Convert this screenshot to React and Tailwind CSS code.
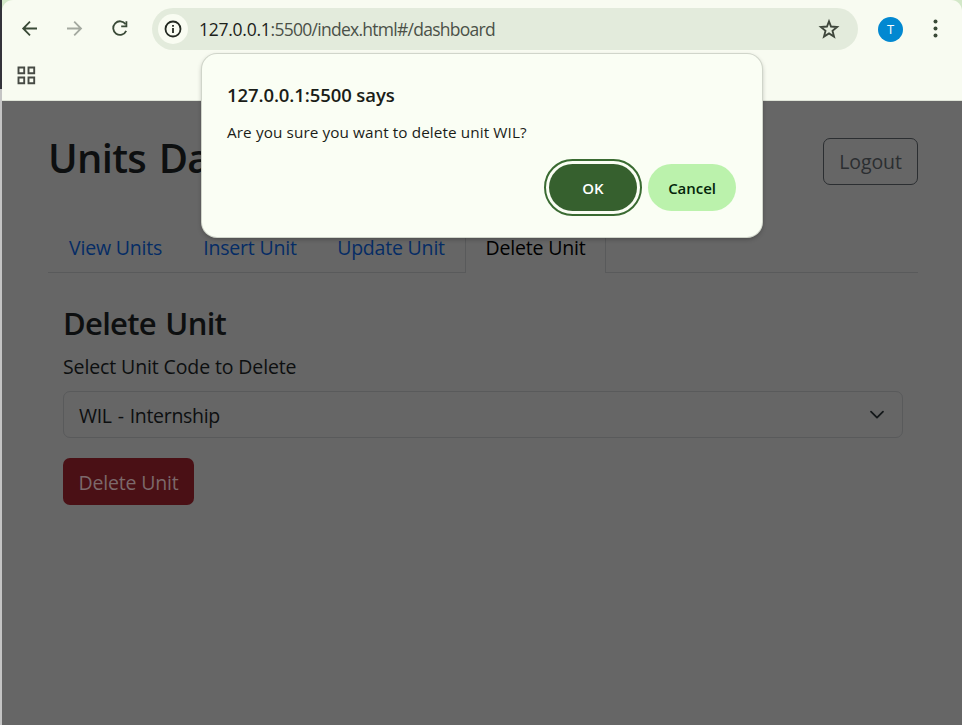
function Toolbar() {
  return (
    <header className="h-[101px] shrink-0 rounded-t-[11px] border-b border-[#dfe4d8] bg-[#f8fbf1]">
      <div className="flex h-[58px] items-center">
        <svg className="ml-[16px] size-6 shrink-0" viewBox="0 0 24 24" fill="none" stroke="#3a4a37" strokeWidth="1.8">
          <path d="M19 11.5H5.5M12 4.7L5.2 11.5L12 18.3" />
        </svg>
        <svg className="ml-[21px] size-6 shrink-0" viewBox="0 0 24 24" fill="none" stroke="#a4a9a0" strokeWidth="1.8">
          <path d="M4 11.5H17.8M11.2 4.7L18 11.5L11.2 18.3" />
        </svg>
        <svg className="ml-[21px] size-6 shrink-0" viewBox="0 0 24 24" fill="none" stroke="#3a4a37" strokeWidth="1.8">
          <path d="M17.6 7.2A6.8 6.8 0 1 0 18.2 13.9" />
          <path d="M18.4 4.2V9.4H13.2" />
        </svg>
        <div className="ml-[20px] flex h-[42px] w-[706px] shrink-0 items-center rounded-full bg-[#e3ebdc] pl-[6px] pr-[18px]">
          <div className="flex size-[30px] items-center justify-center rounded-full bg-[#f9fcf2]">
            <svg className="size-[18px]" viewBox="0 0 18 18" fill="none" stroke="#222820" strokeWidth="1.8">
              <circle cx="9" cy="9" r="7.5" />
              <path d="M9 8v5M9 5v1.8" />
            </svg>
          </div>
          <div className="ml-[11px] text-[17.5px] leading-[24px] tracking-[-0.73px] whitespace-nowrap text-[#4b5148]">
            <span className="tracking-[-0.25px] text-[#1c211a]">127.0.0.1</span>:5500/index.html#/dashboard
          </div>
          <svg className="ml-auto size-[22px]" viewBox="0 0 24 24" fill="none" stroke="#3f473c" strokeWidth="2">
            <path d="M12 3.6L14.2 9.3L20.9 9.8L15.8 14L17.5 20.3L12 16.8L6.5 20.3L8.2 14L3.1 9.8L9.8 9.3Z" />
          </svg>
        </div>
        <div className="ml-[20px] flex size-[25px] shrink-0 items-center justify-center rounded-full bg-[#0288d1] text-[13px] leading-none text-white">
          T
        </div>
        <svg className="ml-[29px] h-[20px] w-[7px] shrink-0" viewBox="0 0 7 20" fill="#3a4a37">
          <circle cx="3.5" cy="2.6" r="2" />
          <circle cx="3.5" cy="9.5" r="2" />
          <circle cx="3.5" cy="16.4" r="2" />
        </svg>
      </div>
      <svg className="mt-[8px] ml-[15px] size-[19px]" viewBox="0 0 19 19" fill="none" stroke="#474b45" strokeWidth="1.9">
        <path d="M1.5 1.5h5.7v5.7H1.5zM11.5 1.5h5.7v5.7h-5.7zM1.5 11.5h5.7v5.7H1.5zM11.5 11.5h5.7v5.7h-5.7z" />
      </svg>
    </header>
  );
}

function Tab({ label, className }) {
  return (
    <div className={"flex h-full shrink-0 items-center justify-center border-[#595a5b] whitespace-nowrap " + className}>
      {label}
    </div>
  );
}

function Page() {
  return (
    <main className="flex flex-1 flex-col bg-[#666666] pt-[37px] pr-[44px] pl-[46px] text-[19.5px] text-[#0d0f10]">
      <div className="flex h-[47px] items-center justify-between">
        <h1 className="-mt-[7px] text-[40px] leading-[48px] font-semibold tracking-[-0.7px] [word-spacing:3px]">Units Da</h1>
        <button className="h-[47px] w-[95px] rounded-[7px] border border-[#2b2e31] pt-px tracking-[-0.1px] text-[#2b2e31]">Logout</button>
      </div>
      <nav className="mt-[38px] flex h-[50px] tracking-[-0.2px] text-[#052c65]">
        <Tab label="View Units" className="w-[135px] border-b pt-px" />
        <Tab label="Insert Unit" className="w-[134px] border-b pt-px" />
        <Tab label="Update Unit" className="w-[148px] border-b pt-px" />
        <Tab label="Delete Unit" className="w-[141px] border-x text-black" />
        <div className="flex-1 border-b border-[#595a5b]" />
      </nav>
      <section className="flex flex-col items-start px-[15px] pt-[31px]">
        <h2 className="text-[31px] leading-[38px] font-semibold tracking-[-0.7px] [word-spacing:2px]">Delete Unit</h2>
        <label className="mt-[10px] leading-[30px] tracking-[-0.12px]">Select Unit Code to Delete</label>
        <div className="mt-[9px] flex h-[47px] w-full items-center justify-between rounded-[7px] border border-[#595a5b] pr-[17px] pl-[15px] tracking-[-0.3px] [word-spacing:1.2px]">
          <span className="pt-[3px]">WIL - Internship</span>
          <svg className="size-[16px]" viewBox="0 0 16 16" fill="none" stroke="#14181a" strokeWidth="1.8" strokeLinecap="round" strokeLinejoin="round">
            <path d="M2 4.6l6 6 6-6" />
          </svg>
        </div>
        <button className="mt-[20px] h-[47px] w-[131px] rounded-[7px] bg-[#4a1015] pt-[3px] tracking-[-0.2px] whitespace-nowrap text-[#7c696b]">
          Delete Unit
        </button>
      </section>
    </main>
  );
}

function ConfirmDialog() {
  return (
    <div className="absolute top-[54px] left-[202px] flex h-[183px] w-[560px] flex-col rounded-[15px] bg-[#fafef4] px-[26px] pt-[27px] pl-[25px] shadow-[0_0_0_1px_#d0d5ca,0_2px_5px_rgba(0,0,0,0.3)]">
      <div className="text-[18.5px] leading-[28px] font-semibold tracking-[-0.1px] text-[#1a1d18]">127.0.0.1:5500 says</div>
      <div className="mt-[12px] text-[15.3px] leading-[22px] tracking-[0.1px] text-[#1a1d18]">Are you sure you want to delete unit WIL?</div>
      <div className="mt-[21px] flex justify-end gap-[11px] text-[15px] font-semibold">
        <button className="h-[47px] w-[88px] rounded-[24px] bg-[#36602e] pt-px text-white outline-[2px] outline-offset-[3px] outline-[#3a6b32]">OK</button>
        <button className="h-[47px] w-[88px] rounded-[24px] bg-[#bbf2ac] pt-px tracking-[-0.05px] text-[#04250a]">Cancel</button>
      </div>
    </div>
  );
}

export default function App() {
  return (
    <div className="relative flex h-[725px] w-[962px] overflow-hidden bg-[#d3e8c8] font-['Open_Sans','Noto_Sans',sans-serif]">
      <div className="flex w-[2px] shrink-0 flex-col">
        <div className="h-[89px] bg-[#33333a]" />
        <div className="flex-1 bg-[#c4c4c4]" />
      </div>
      <div className="flex flex-1 flex-col">
        <Toolbar />
        <Page />
      </div>
      <ConfirmDialog />
    </div>
  );
}
